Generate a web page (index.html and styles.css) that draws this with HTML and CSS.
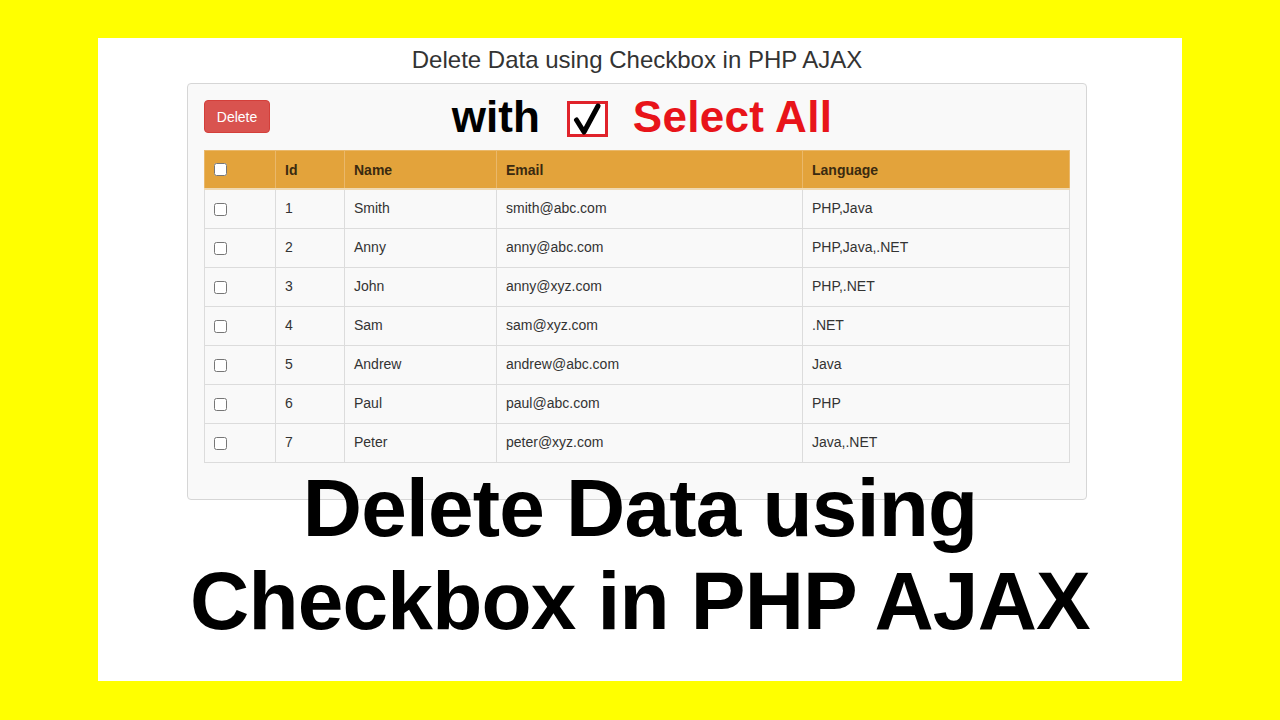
FILE: index.html
```html
<!DOCTYPE html>
<html>
<head>
<meta charset="utf-8">
<link rel="stylesheet" href="styles.css">
</head>
<body>
<div class="frame">
  <h3 class="title">Delete Data using Checkbox in PHP AJAX</h3>
  <div class="well">
    <div class="toolbar">
      <button class="btn-delete">Delete</button>
    </div>
    <div class="banner">
      <span class="with">with</span>
      <svg class="checkicon" width="41" height="36" viewBox="0 0 41 36">
        <rect x="1.5" y="1.5" width="38" height="33" fill="#fff" stroke="#e0232b" stroke-width="3"/>
        <path d="M9.5 19 L17 31 L31 5" fill="none" stroke="#000" stroke-width="5" stroke-linecap="round" stroke-linejoin="round"/>
      </svg>
      <span class="selectall">Select All</span>
    </div>
    <table class="grid">
      <thead>
        <tr>
          <th class="c1"><input type="checkbox"></th>
          <th class="c2">Id</th>
          <th class="c3">Name</th>
          <th class="c4">Email</th>
          <th class="c5">Language</th>
        </tr>
      </thead>
      <tbody>
        <tr><td><input type="checkbox"></td><td>1</td><td>Smith</td><td>smith@abc.com</td><td>PHP,Java</td></tr>
        <tr><td><input type="checkbox"></td><td>2</td><td>Anny</td><td>anny@abc.com</td><td>PHP,Java,.NET</td></tr>
        <tr><td><input type="checkbox"></td><td>3</td><td>John</td><td>anny@xyz.com</td><td>PHP,.NET</td></tr>
        <tr><td><input type="checkbox"></td><td>4</td><td>Sam</td><td>sam@xyz.com</td><td>.NET</td></tr>
        <tr><td><input type="checkbox"></td><td>5</td><td>Andrew</td><td>andrew@abc.com</td><td>Java</td></tr>
        <tr><td><input type="checkbox"></td><td>6</td><td>Paul</td><td>paul@abc.com</td><td>PHP</td></tr>
        <tr><td><input type="checkbox"></td><td>7</td><td>Peter</td><td>peter@xyz.com</td><td>Java,.NET</td></tr>
      </tbody>
    </table>
  </div>
  <div class="bigtext">Delete Data using<br>Checkbox in PHP AJAX</div>
</div>
</body>
</html>
```

FILE: styles.css
```css
html, body {
  margin: 0;
  padding: 0;
}
body {
  background: #ffff00;
  padding: 38px 98px 39px 98px;
  font-family: "Liberation Sans", Arial, Helvetica, sans-serif;
  color: #333;
}
.frame {
  position: relative;
  background: #fff;
  height: 643px;
  overflow: hidden;
}
.title {
  margin: 0;
  padding-top: 9px;
  padding-right: 6px;
  height: 36px;
  font-size: 24px;
  line-height: 26px;
  font-weight: normal;
  text-align: center;
  color: #333;
  padding-left: 0;
}
.well {
  position: relative;
  margin-left: 89px;
  width: 866px;
  padding: 16px 16px 36px 16px;
  background: #f9f9f9;
  border: 1px solid #d6d6d6;
  border-radius: 4px;
}
.toolbar {
  display: flex;
  height: 33px;
  margin-bottom: 17px;
}
.btn-delete {
  width: 66px;
  height: 33px;
  padding: 0;
  background: #d9534f;
  border: 1px solid #d43f3a;
  border-radius: 4px;
  color: #fff;
  font-family: "Liberation Sans", Arial, sans-serif;
  font-size: 14px;
}
.banner {
  position: absolute;
  left: 0;
  right: 0;
  top: 11px;
  display: flex;
  justify-content: center;
  align-items: center;
  padding-left: 10px;
  gap: 27px;
  font-weight: bold;
  font-size: 44px;
  line-height: 44px;
}
.with {
  color: #000;
}
.checkicon {
  display: block;
  margin-top: 4px;
}
.selectall {
  color: #e8141a;
  margin-left: -2px;
  letter-spacing: 0.3px;
}
.grid {
  border-collapse: collapse;
  width: 866px;
  table-layout: fixed;
  font-size: 14px;
  line-height: 20px;
}
.grid th, .grid td {
  border: 1px solid #dcdcdc;
  padding: 9px 9px 9px 9px;
  text-align: left;
  vertical-align: middle;
  height: 20px;
}
.grid tbody td {
  padding-top: 8px;
  padding-bottom: 10px;
}
.grid thead th {
  background: #e3a33b;
  border-color: #eab86a;
  border-bottom: 2px solid #efd9b3;
  color: #3a2a10;
  font-weight: bold;
  padding-top: 9px;
  padding-bottom: 8px;
}
.grid tbody td {
  background: #f9f9f9;
  color: #333;
}
.grid input[type="checkbox"] {
  margin: 0;
  width: 13px;
  height: 13px;
  vertical-align: middle;
  position: relative;
  top: 0px;
}
.grid thead input[type="checkbox"] {
  top: -2px;
}
.c1 { width: 52px; }
.c2 { width: 50px; }
.c3 { width: 133px; }
.c4 { width: 287px; }
.c5 { width: auto; }
.bigtext {
  position: absolute;
  left: 0;
  right: 0;
  top: 423px;
  text-align: center;
  font-family: "Liberation Sans", Arial, sans-serif;
  font-weight: bold;
  font-size: 82px;
  line-height: 93px;
  color: #000;
  letter-spacing: -0.8px;
}
```
